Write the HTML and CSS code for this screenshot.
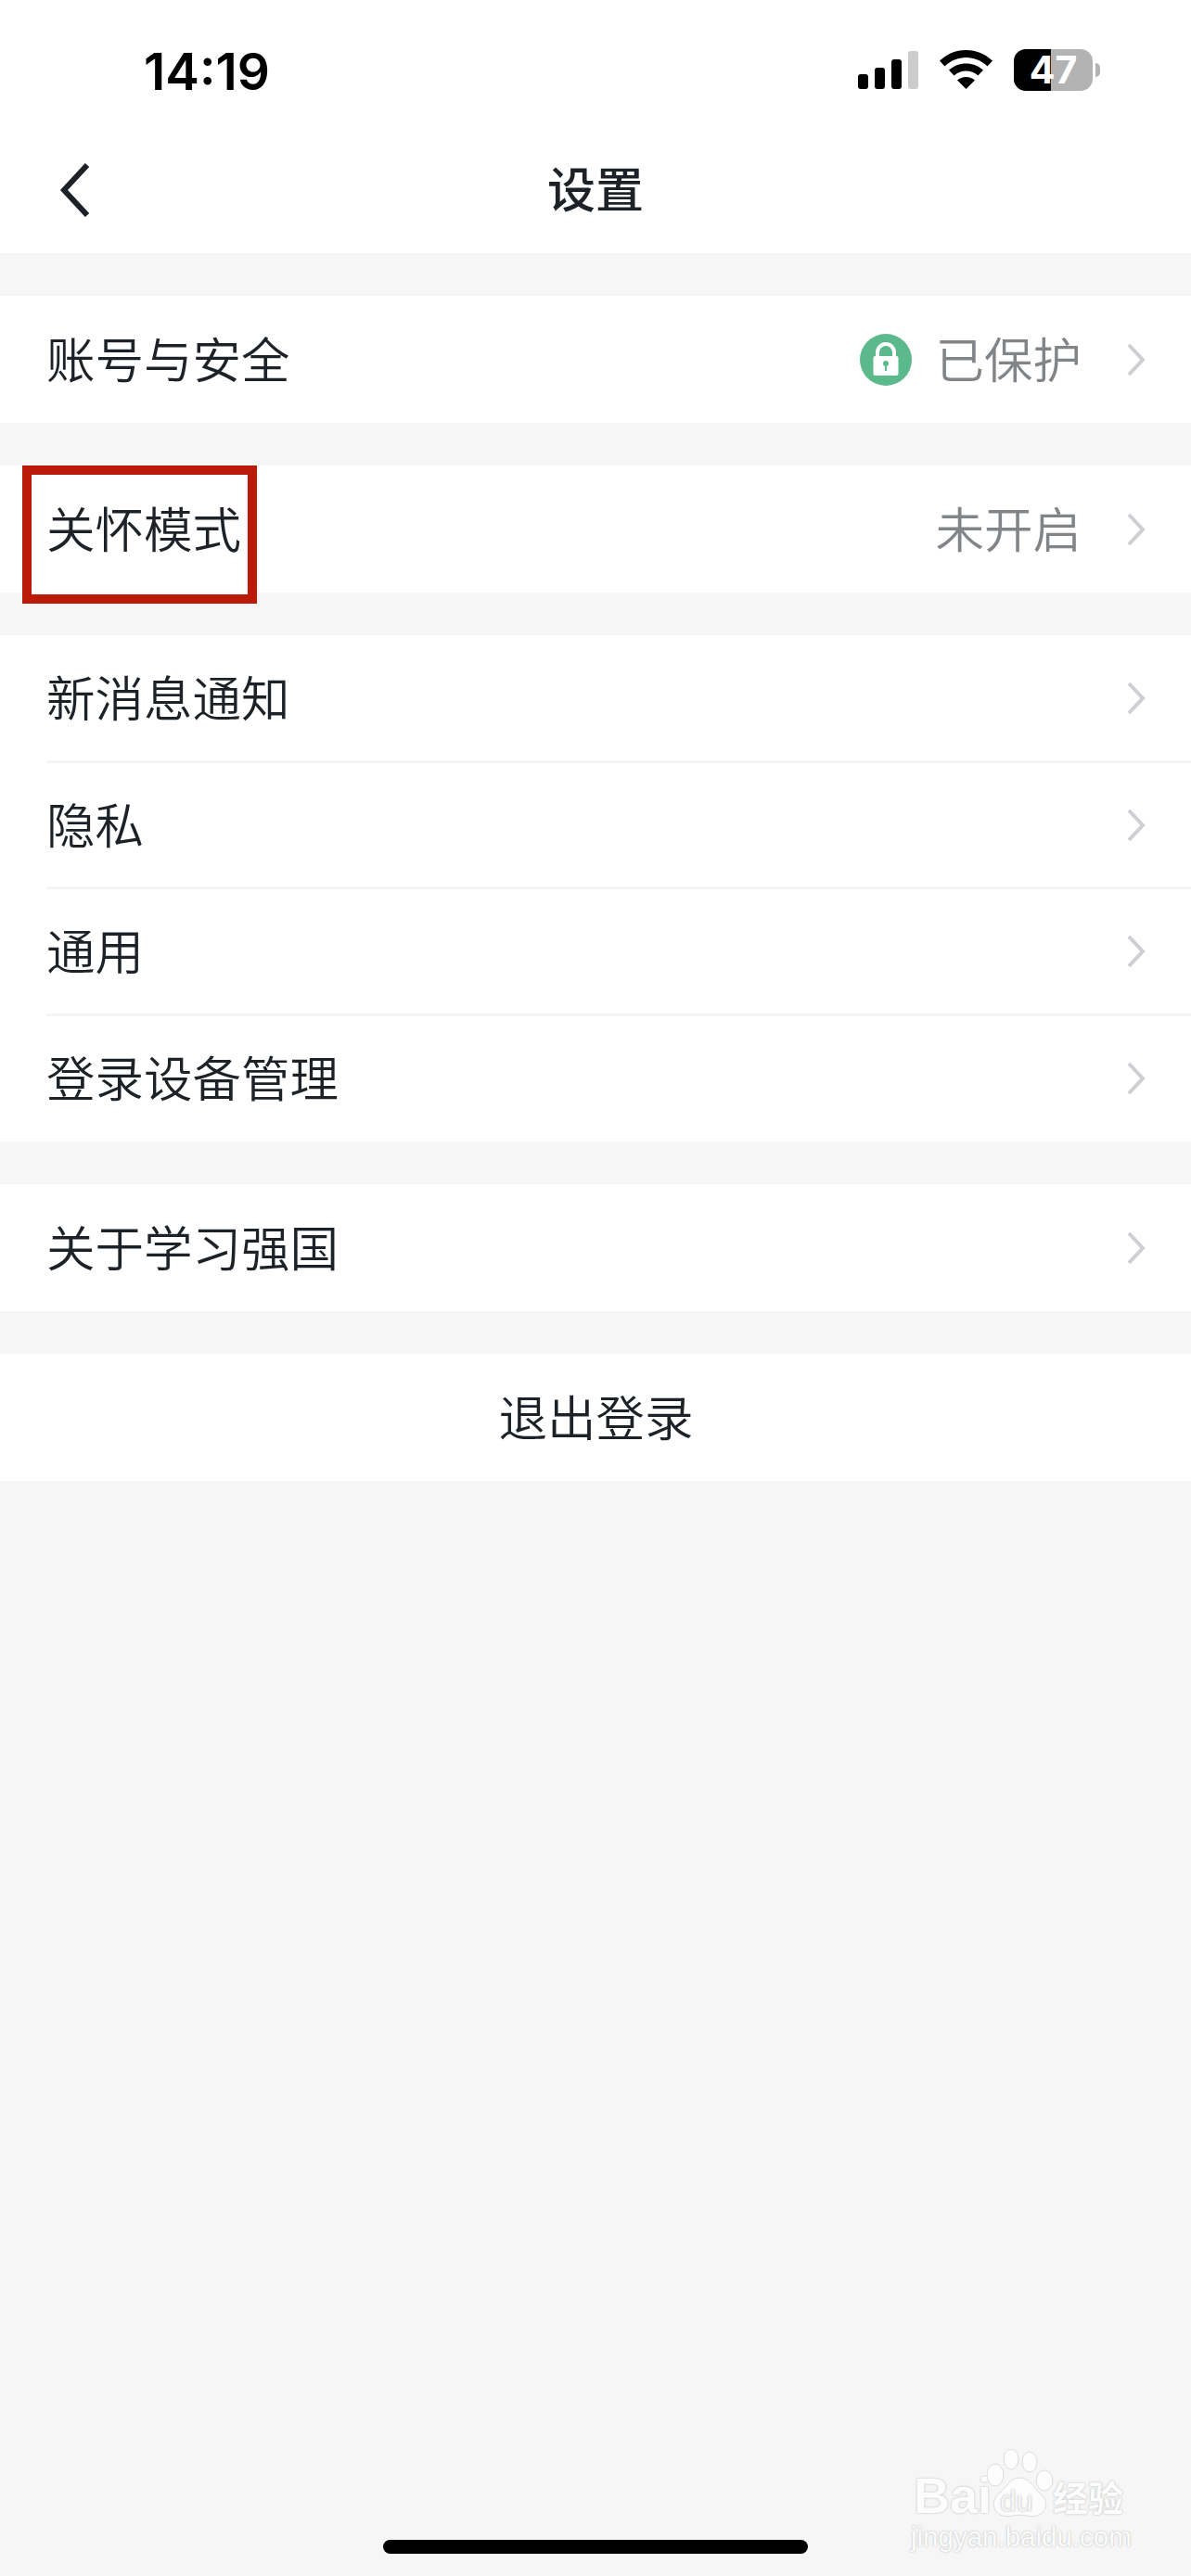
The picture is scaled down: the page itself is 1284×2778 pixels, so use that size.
FILE: index.html
```html
<!DOCTYPE html>
<html lang="zh-CN">
<head>
    <meta charset="UTF-8">
    <meta name="viewport" content="width=device-width, initial-scale=1.0">
    <title>设置</title>
    <link rel="stylesheet" href="styles.css">
</head>
<body>
    <div class="phone">
        <div class="status-bar">
            <span class="clock">14:19</span>
            <div class="status-icons">
                <div class="signal">
                    <span class="bar bar-1"></span>
                    <span class="bar bar-2"></span>
                    <span class="bar bar-3"></span>
                    <span class="bar bar-4"></span>
                </div>
                <svg class="wifi" width="57" height="42" viewBox="0 0 57 42">
                    <path d="M28.5 0C17.5 0 8 4.2 0 11.5l5.5 6C12 11.500 19.800 8 28.500 8S45 11.500 51.500 17.500l5.500-6C49 4.200 39.500 0 28.500 0z"/>
                    <path d="M28.500 14.500C21.500 14.500 15.500 17 10 21.500l5.500 6C19.500 24.200 23.800 22.500 28.500 22.500s9 1.700 13 5l5.500-6C41.500 17 35.500 14.500 28.500 14.500z"/>
                    <path d="M28.500 29c-3.700 0-6.800 1.200-9.500 3.500L28.500 42 38 32.500C35.300 30.200 32.200 29 28.500 29z"/>
                </svg>
                <div class="battery">
                    <div class="battery-body">
                        <span class="battery-fill"></span>
                        <span class="battery-num">47</span>
                    </div>
                    <span class="battery-nub"></span>
                </div>
            </div>
        </div>

        <header class="nav-bar">
            <svg class="back" width="32" height="58" viewBox="0 0 32 58">
                <path d="M30 2 L5 29 L30 56" fill="none" stroke="#1c2227" stroke-width="6"/>
            </svg>
            <h1 class="nav-title">设置</h1>
        </header>

        <main class="list">
            <section class="group">
                <div class="row">
                    <span class="row-label">账号与安全</span>
                    <div class="row-right">
                        <svg class="lock" width="56" height="56" viewBox="0 0 56 56">
                            <circle cx="28" cy="28" r="28" fill="#5bb98b"/>
                            <path d="M19 25v-5a9 9 0 0 1 18 0v5" fill="none" stroke="#fff" stroke-width="4"/>
                            <rect x="14.500" y="24" width="27" height="21" rx="2" fill="#fff"/>
                            <circle cx="28" cy="32" r="3" fill="#5bb98b"/>
                            <rect x="27" y="33" width="2" height="7" fill="#5bb98b"/>
                        </svg>
                        <span class="row-value">已保护</span>
                        <svg class="chevron" width="20" height="36" viewBox="0 0 20 36">
                            <path d="M2 2 L17 18 L2 34" fill="none" stroke="#cdcfd3" stroke-width="4"/>
                        </svg>
                    </div>
                </div>
            </section>

            <section class="group">
                <div class="row">
                    <span class="row-label">关怀模式</span>
                    <div class="row-right">
                        <span class="row-value">未开启</span>
                        <svg class="chevron" width="20" height="36" viewBox="0 0 20 36">
                            <path d="M2 2 L17 18 L2 34" fill="none" stroke="#cdcfd3" stroke-width="4"/>
                        </svg>
                    </div>
                    <div class="highlight-box"></div>
                </div>
            </section>

            <section class="group">
                <div class="row row-short">
                    <span class="row-label">新消息通知</span>
                    <svg class="chevron" width="20" height="36" viewBox="0 0 20 36">
                        <path d="M2 2 L17 18 L2 34" fill="none" stroke="#cdcfd3" stroke-width="4"/>
                    </svg>
                </div>
                <div class="row row-short">
                    <span class="row-label">隐私</span>
                    <svg class="chevron" width="20" height="36" viewBox="0 0 20 36">
                        <path d="M2 2 L17 18 L2 34" fill="none" stroke="#cdcfd3" stroke-width="4"/>
                    </svg>
                </div>
                <div class="row row-short">
                    <span class="row-label">通用</span>
                    <svg class="chevron" width="20" height="36" viewBox="0 0 20 36">
                        <path d="M2 2 L17 18 L2 34" fill="none" stroke="#cdcfd3" stroke-width="4"/>
                    </svg>
                </div>
                <div class="row row-short">
                    <span class="row-label">登录设备管理</span>
                    <svg class="chevron" width="20" height="36" viewBox="0 0 20 36">
                        <path d="M2 2 L17 18 L2 34" fill="none" stroke="#cdcfd3" stroke-width="4"/>
                    </svg>
                </div>
            </section>

            <section class="group">
                <div class="row">
                    <span class="row-label">关于学习强国</span>
                    <svg class="chevron" width="20" height="36" viewBox="0 0 20 36">
                        <path d="M2 2 L17 18 L2 34" fill="none" stroke="#cdcfd3" stroke-width="4"/>
                    </svg>
                </div>
            </section>

            <section class="group">
                <div class="row row-center">
                    <span class="row-label">退出登录</span>
                </div>
            </section>
        </main>

        <div class="home-indicator"></div>

        <div class="watermark">
            <div class="wm-logo">
                <span class="wm-bai">Bai</span>
                <svg class="wm-paw" width="72" height="78" viewBox="0 0 72 78">
                    <ellipse cx="9" cy="28" rx="9" ry="12" fill="#fcfcfc" stroke="#dcdcdc"/>
                    <ellipse cx="26" cy="11" rx="8" ry="11" fill="#fcfcfc" stroke="#dcdcdc"/>
                    <ellipse cx="46" cy="14" rx="8" ry="11" fill="#fcfcfc" stroke="#dcdcdc"/>
                    <ellipse cx="62" cy="34" rx="9" ry="11" fill="#fcfcfc" stroke="#dcdcdc"/>
                    <path d="M35 31c-9 0-13 9-20 15-7 6-9 12-7 18 3 8 12 10 20 8 5-1 10-1 15 0 9 2 18-1 20-9 2-7-1-12-8-17C50 40 45 31 35 31z" fill="#fcfcfc" stroke="#dcdcdc"/>
                </svg>
                <span class="wm-du">du</span>
                <span class="wm-cn">经验</span>
            </div>
            <div class="wm-url">jingyan.baidu.com</div>
        </div>
    </div>
</body>
</html>
```

FILE: styles.css
```css
* {
  margin: 0;
  padding: 0;
  box-sizing: border-box;
}

body {
  font-family: "Noto Sans CJK SC", "Liberation Sans", sans-serif;
  background-color: #f6f6f6;
  color: #1c2227;
}

.phone {
  position: relative;
  width: 1284px;
  height: 2778px;
  overflow: hidden;
  background-color: #f6f6f6;
}

/* status bar */
.status-bar {
  display: flex;
  justify-content: space-between;
  align-items: flex-start;
  height: 137px;
  background-color: #fff;
  padding: 53px 98px 0 155px;
}

.clock {
  font-family: Inter, "Liberation Sans", sans-serif;
  font-size: 55px;
  font-weight: 600;
  line-height: 48px;
  color: #000;
}

.status-icons {
  display: flex;
  align-items: flex-start;
}

.signal {
  display: flex;
  align-items: flex-end;
  gap: 7px;
  height: 41px;
  margin-top: 2px;
  margin-right: 23px;
}

.bar {
  width: 11px;
  background-color: #000;
  border-radius: 3px;
}

.bar-1 { height: 16px; }
.bar-2 { height: 23px; }
.bar-3 { height: 32px; }
.bar-4 { height: 41px; background-color: #ccc; }

.wifi {
  margin-top: 1px;
  margin-right: 23px;
}

.battery {
  display: flex;
  align-items: center;
  gap: 3px;
}

.battery-body {
  position: relative;
  display: flex;
  align-items: center;
  justify-content: center;
  width: 85px;
  height: 45px;
  background-color: #b3b3b3;
  border-radius: 13px;
}

.battery-fill {
  position: absolute;
  left: 0;
  top: 0;
  bottom: 0;
  width: 40px;
  background-color: #000;
  border-radius: 13px 0 0 13px;
}

.battery-num {
  position: relative;
  font-family: Inter, "Liberation Sans", sans-serif;
  font-size: 41px;
  font-weight: 700;
  line-height: 45px;
  color: #fff;
}

.battery-nub {
  width: 5px;
  height: 15px;
  background-color: #b3b3b3;
  border-radius: 0 8px 8px 0;
}

/* nav bar */
.nav-bar {
  position: relative;
  display: flex;
  align-items: center;
  justify-content: center;
  height: 136px;
  background-color: #fff;
}

.back {
  position: absolute;
  left: 64px;
  top: 39px;
}

.nav-title {
  font-size: 52px;
  font-weight: 500;
  line-height: 60px;
  margin-top: -7px;
}

/* settings list */
.list {
  display: flex;
  flex-direction: column;
  gap: 46px;
  padding-top: 46px;
}

.group {
  background-color: #fff;
}

.row {
  position: relative;
  display: flex;
  align-items: center;
  justify-content: space-between;
  height: 137px;
  padding: 0 49px 0 50px;
}

.row-short {
  height: 136.5px;
}

.row-short + .row-short::before {
  content: "";
  position: absolute;
  left: 50px;
  right: 0;
  top: -2px;
  height: 3px;
  background-color: #f4f4f4;
}

.row-center {
  justify-content: center;
}

.row-label {
  font-size: 52.5px;
  font-weight: 350;
  line-height: 64px;
  margin-top: -6px;
}

.row-right {
  display: flex;
  align-items: center;
}

.row-value {
  font-size: 52.5px;
  font-weight: 350;
  line-height: 64px;
  color: #828588;
  margin-top: -6px;
  margin-right: 49px;
}

.lock {
  margin-right: 25px;
}

/* red annotation box */
.highlight-box {
  position: absolute;
  left: 24px;
  top: 0;
  width: 253px;
  height: 149px;
  border: 10px solid #bb1a08;
}

.home-indicator {
  position: absolute;
  left: 413px;
  bottom: 24px;
  width: 458px;
  height: 15px;
  background-color: #000;
  border-radius: 8px;
}

/* baidu watermark */
.watermark {
  position: absolute;
  left: 985px;
  top: 2640px;
  width: 235px;
  color: #fcfcfc;
  text-shadow: 0 0 1px #b8b8b8, 0 0 3px #cfcfcf;
}

.wm-logo {
  position: relative;
  height: 80px;
}

.wm-bai {
  position: absolute;
  left: 0;
  top: 24px;
  font-family: "Liberation Sans", sans-serif;
  font-size: 54px;
  font-weight: 700;
  line-height: 54px;
}

.wm-paw {
  position: absolute;
  left: 79px;
  top: 1px;
}

.wm-du {
  position: absolute;
  left: 93px;
  top: 41px;
  font-family: "Liberation Sans", sans-serif;
  font-size: 32px;
  line-height: 32px;
  color: #f5f5f5;
}

.wm-cn {
  position: absolute;
  left: 150px;
  top: 28px;
  font-size: 38px;
  font-weight: 700;
  line-height: 48px;
}

.wm-url {
  position: absolute;
  left: -3px;
  top: 78px;
  font-family: "Liberation Sans", sans-serif;
  font-size: 29.5px;
  line-height: 36px;
  white-space: nowrap;
}
```
